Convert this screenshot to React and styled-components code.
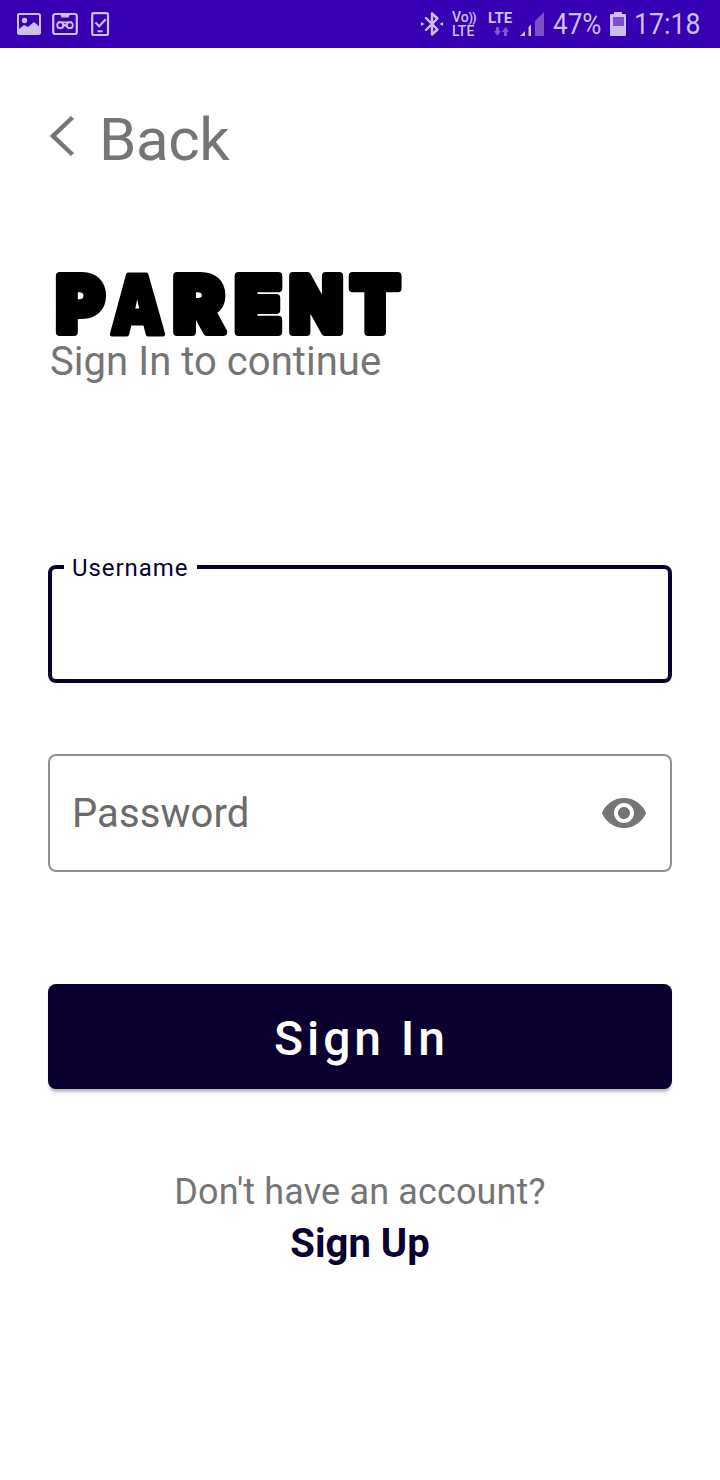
import React from "react";
import styled, { createGlobalStyle } from "styled-components";

const Global = createGlobalStyle`
  * { box-sizing: border-box; }
  body { margin: 0; background: #fff; font-family: Roboto, sans-serif; }
`;

const navy = "#090030";
const grey = "#757575";
const lilac = "#cdbff0";

const Screen = styled.div`
  min-height: 1480px;
  background: #fff;
`;

const StatusBar = styled.header`
  display: flex;
  justify-content: space-between;
  height: 48px;
  padding: 0 19px 0 16px;
  background: #3700b3;
  color: ${lilac};
`;

const StatusGroup = styled.div`
  display: flex;
  align-items: center;
`;

const StatusIcon = styled.svg`
  display: block;
  flex: none;
  margin-left: ${(p) => p.$gap || 0}px;
`;

const Condensed = styled.span`
  width: ${(p) => p.$width}px;
  margin-left: ${(p) => p.$gap}px;
  font-size: 30px;
  line-height: 50px;
  white-space: nowrap;
  transform: scaleX(${(p) => p.$scale});
  transform-origin: left;
`;

const Stacked = styled.div`
  display: flex;
  flex-direction: column;
  width: 25px;
  margin-left: ${(p) => p.$gap}px;
  font-size: ${(p) => p.$size}px;
  font-weight: ${(p) => p.$weight};
  line-height: 13px;
  white-space: nowrap;
  svg { display: block; margin: 2px 0 0 6px; }
`;

const Waves = styled.span`
  font-size: 12px;
  font-weight: 700;
  letter-spacing: -0.6px;
`;

const Content = styled.main`
  display: flex;
  flex-direction: column;
  padding: 56px 48px 0;
`;

const BackButton = styled.button`
  display: flex;
  align-items: center;
  align-self: flex-start;
  gap: 25px;
  height: 70px;
  padding: 0 0 0 2px;
  border: 0;
  background: none;
  color: ${grey};
  font: 400 60px/70px Roboto, sans-serif;
  letter-spacing: -0.4px;
  svg { display: block; margin-bottom: 6px; }
`;

const BackText = styled.span`
  padding-top: 2px;
`;

const Title = styled.h1`
  height: 76px;
  margin: 88px 0 0;
`;

const Wordmark = styled.svg`
  display: block;
  overflow: visible;
  font-family: Inter, sans-serif;
  font-weight: 900;
  fill: #000;
  stroke: #000;
  stroke-linejoin: round;
`;

const Subtitle = styled.p`
  margin: 0 0 0 2px;
  color: ${grey};
  font-size: 40px;
  line-height: 47px;
  letter-spacing: 0.05px;
`;

const Field = styled.div`
  position: relative;
  display: flex;
  align-items: center;
  justify-content: space-between;
  height: 118px;
  margin-top: ${(p) => p.$top}px;
  padding: 0 22px;
  border: ${(p) => (p.$active ? `4px solid ${navy}` : "2px solid #919191")};
  border-radius: 8px;
`;

const FloatingLabel = styled.label`
  position: absolute;
  top: -15px;
  left: 12px;
  padding: 0 8px;
  background: #fff;
  color: ${navy};
  font-size: 24px;
  line-height: 28px;
  letter-spacing: 0.95px;
`;

const Placeholder = styled.span`
  color: #6b6b6b;
  font-size: 40px;
  line-height: 47px;
  letter-spacing: 0.1px;
`;

const SignIn = styled.button`
  height: 105px;
  margin-top: 112px;
  padding: 4px 0 0 3px;
  border: 0;
  border-radius: 8px;
  background: ${navy};
  box-shadow: 0 4px 3px -1px rgba(0, 0, 0, 0.28);
  color: #fff;
  font: 500 48px/56px Roboto, sans-serif;
  letter-spacing: 3.9px;
`;

const Prompt = styled.p`
  margin: 82px 0 0;
  color: ${grey};
  font-size: 36px;
  line-height: 42px;
  letter-spacing: 0.14px;
  text-align: center;
`;

const SignUp = styled.a`
  margin-top: 7px;
  color: ${navy};
  font-size: 40px;
  font-weight: 700;
  line-height: 47px;
  text-align: center;
`;

const letters = [
  { char: "P", x: 8.2, scale: 0.947 },
  { char: "A", x: 62.5, scale: 0.84, size: 81, stroke: 5, y: 72 },
  { char: "R", x: 125.4, scale: 0.987 },
  { char: "E", x: 187, scale: 0.987 },
  { char: "N", x: 241.5, scale: 0.9 },
  { char: "T", x: 302.5, scale: 0.933 },
];

export default function App() {
  return (
    <Screen>
      <Global />
      <StatusBar>
        <StatusGroup>
          <StatusIcon width="26" height="24" viewBox="0 0 26 24">
            <rect x="2" y="2" width="22" height="20" rx="1.5" fill="none" stroke={lilac} strokeWidth="2" />
            <circle cx="8.5" cy="8.5" r="2.7" fill={lilac} />
            <path d="M3 17l5-4 4 2 6-5 6 5v7H3z" fill={lilac} />
          </StatusIcon>
          <StatusIcon $gap={10} width="26" height="24" viewBox="0 0 26 24">
            <rect x="1.2" y="2" width="23.6" height="20" rx="2" fill="none" stroke={lilac} strokeWidth="2.2" />
            <path d="M8 2h10l-1.5 3.500h-7z" fill={lilac} />
            <g fill="none" stroke={lilac} strokeWidth="1.8">
              <circle cx="8.2" cy="13.2" r="3" />
              <circle cx="17.8" cy="13.2" r="3" />
              <path d="M6 10.400h14M10.800 14.800l2.200-2 2.200 2" />
            </g>
          </StatusIcon>
          <StatusIcon $gap={13} width="19" height="24" viewBox="0 0 19 24">
            <rect x="1.2" y="1.2" width="15.8" height="21.8" rx="1.5" fill="none" stroke={lilac} strokeWidth="2.2" />
            <path d="M4.500 10.500l3.700 3.700 6.500-7M6.500 19.300h5" fill="none" stroke={lilac} strokeWidth="2.1" />
          </StatusIcon>
        </StatusGroup>
        <StatusGroup>
          <StatusIcon width="24" height="26" viewBox="0 0 24 26" fill="none" stroke={lilac} strokeWidth="2.4">
            <path d="M6 7l11.500 11.500-5.500 5V2.500l5.500 5L6 19" strokeLinejoin="round" strokeLinecap="round" />
            <path d="M1 11l3.500 2L1 15zM23 11l-3.500 2 3.500 2z" fill={lilac} stroke="none" />
          </StatusIcon>
          <Stacked $gap={8} $size={14} $weight={500}>
            <span>Vo<Waves>))</Waves></span>
            <span>LTE</span>
          </Stacked>
          <Stacked $gap={11} $size={15} $weight={700}>
            <span>LTE</span>
            <svg width="15" height="9" viewBox="0 0 15 9" fill="#7d57cd">
              <path d="M2 0h3v4h2L3.500 9 0 4h2zM10 9h3V5h2l-3.500-5L8 5h2z" />
            </svg>
          </Stacked>
          <StatusIcon $gap={7} width="25" height="25" viewBox="0 0 25 25">
            <path d="M0 24l5-5v5zM8.500 24V15l2.500-2.500V24z" fill={lilac} />
            <path d="M15 24V9l9-9v24z" fill="#7b4fcd" />
          </StatusIcon>
          <Condensed $gap={8} $width={49} $scale={0.87}>47%</Condensed>
          <StatusIcon $gap={8} width="16" height="24" viewBox="0 0 16 24">
            <path d="M4 0h8v2h3q1 0 1 1v20q0 1-1 1H1q-1 0-1-1V3q0-1 1-1h3z" fill={lilac} />
            <path d="M3 5h11v9H3z" fill="#7b4fcd" />
          </StatusIcon>
          <Condensed $gap={8} $width={67} $scale={0.89}>17:18</Condensed>
        </StatusGroup>
      </StatusBar>
      <Content>
        <BackButton>
          <svg width="24" height="40" viewBox="0 0 24 40">
            <path d="M22.500 1.500L3 20l19.500 18.500" fill="none" stroke={grey} strokeWidth="4.4" />
          </svg>
          <BackText>Back</BackText>
        </BackButton>
        <Title>
          <Wordmark width="360" height="76" viewBox="0 0 360 76">
            {letters.map(({ char, x, scale, size = 77, stroke = 8, y = 70.3 }) => (
              <text
                key={char}
                transform={`translate(${x} ${y}) scale(${scale} 1)`}
                fontSize={size}
                strokeWidth={stroke}
              >
                {char}
              </text>
            ))}
          </Wordmark>
        </Title>
        <Subtitle>Sign In to continue</Subtitle>
        <Field $active $top={180}>
          <FloatingLabel>Username</FloatingLabel>
        </Field>
        <Field $top={71}>
          <Placeholder>Password</Placeholder>
          <svg width="48" height="48" viewBox="0 0 24 24" fill={grey}>
            <path d="M12 4.500C7 4.500 2.730 7.610 1 12c1.730 4.390 6 7.500 11 7.500s9.270-3.110 11-7.500c-1.730-4.390-6-7.500-11-7.500zM12 17c-2.760 0-5-2.240-5-5s2.240-5 5-5 5 2.240 5 5-2.240 5-5 5zm0-8c-1.660 0-3 1.340-3 3s1.340 3 3 3 3-1.340 3-3-1.340-3-3-3z" />
          </svg>
        </Field>
        <SignIn>Sign In</SignIn>
        <Prompt>Don't have an account?</Prompt>
        <SignUp>Sign Up</SignUp>
      </Content>
    </Screen>
  );
}
